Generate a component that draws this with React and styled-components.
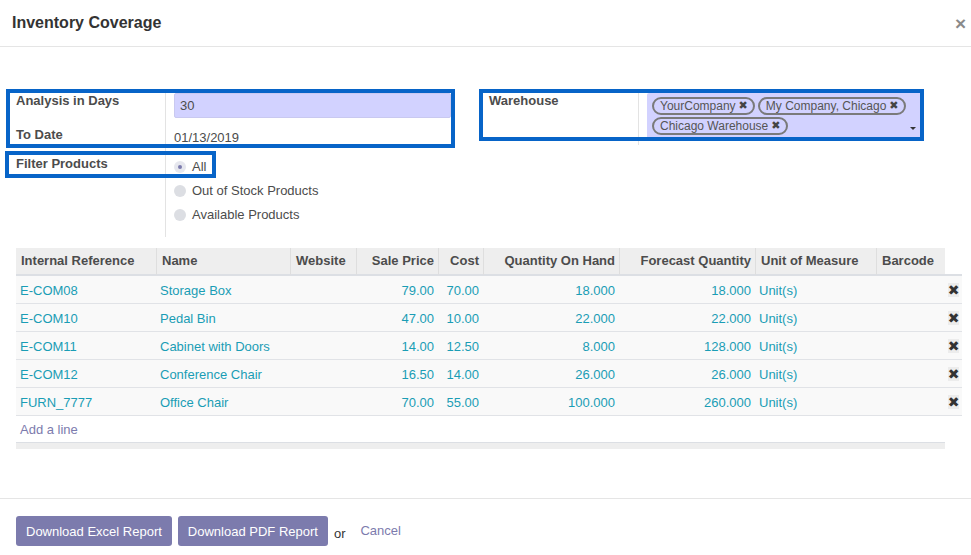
import React from "react";
import styled, { createGlobalStyle } from "styled-components";

const PURPLE = "#7c7bad";
const TEAL = "#1a9db5";

const rows = [
  { ref: "E-COM08", name: "Storage Box", price: "79.00", cost: "70.00", onHand: "18.000", forecast: "18.000" },
  { ref: "E-COM10", name: "Pedal Bin", price: "47.00", cost: "10.00", onHand: "22.000", forecast: "22.000" },
  { ref: "E-COM11", name: "Cabinet with Doors", price: "14.00", cost: "12.50", onHand: "8.000", forecast: "128.000" },
  { ref: "E-COM12", name: "Conference Chair", price: "16.50", cost: "14.00", onHand: "26.000", forecast: "26.000" },
  { ref: "FURN_7777", name: "Office Chair", price: "70.00", cost: "55.00", onHand: "100.000", forecast: "260.000" },
];

const columns = [
  { label: "Internal Reference", width: 140 },
  { label: "Name", width: 134 },
  { label: "Website", width: 66 },
  { label: "Sale Price", width: 82, right: true },
  { label: "Cost", width: 45, right: true },
  { label: "Quantity On Hand", width: 136, right: true },
  { label: "Forecast Quantity", width: 136, right: true },
  { label: "Unit of Measure", width: 121 },
  { label: "Barcode", width: 69 },
];

const warehouses = ["YourCompany", "My Company, Chicago", "Chicago Warehouse"];

export default function App() {
  return (
    <>
      <GlobalStyle />
      <Modal>
        <Header>
          <Title>Inventory Coverage</Title>
          <Close>×</Close>
        </Header>

        <Body>
          <FormRow>
            <Group>
              <Label>Analysis in Days</Label>
              <Field $pad="1px 0 8px 8px">
                <Input defaultValue="30" />
              </Field>
              <Label>To Date</Label>
              <Field $pad="3px 0 8px 8px">01/13/2019</Field>
              <Label>Filter Products</Label>
              <Field $pad="2px 0 8px 8px">
                <RadioItem>
                  <Radio $checked />
                  All
                </RadioItem>
                <RadioItem>
                  <Radio />
                  Out of Stock Products
                </RadioItem>
                <RadioItem>
                  <Radio />
                  Available Products
                </RadioItem>
              </Field>
            </Group>

            <Group>
              <Label>Warehouse</Label>
              <Field $pad="1px 0 4px 8px">
                <TagField>
                  {warehouses.map((w) => (
                    <Tag key={w}>
                      {w}
                      <TagX>✖</TagX>
                    </Tag>
                  ))}
                  <Caret />
                </TagField>
              </Field>
            </Group>
          </FormRow>

          <Table>
            <colgroup>
              {columns.map((c) => (
                <col key={c.label} style={{ width: c.width }} />
              ))}
              <col style={{ width: 17 }} />
            </colgroup>
            <thead>
              <tr>
                {columns.map((c, i) => (
                  <Th key={c.label} $right={c.right} $first={i === 0}>
                    {c.label}
                  </Th>
                ))}
                <Th $blank />
              </tr>
            </thead>
            <tbody>
              {rows.map((r) => (
                <Row key={r.ref}>
                  <Td>{r.ref}</Td>
                  <Td>{r.name}</Td>
                  <Td />
                  <Td $right>{r.price}</Td>
                  <Td $right>{r.cost}</Td>
                  <Td $right>{r.onHand}</Td>
                  <Td $right>{r.forecast}</Td>
                  <Td>Unit(s)</Td>
                  <Td />
                  <DeleteCell>
                    <DeleteIcon>✖</DeleteIcon>
                  </DeleteCell>
                </Row>
              ))}
              <tr>
                <AddCell colSpan={10}>
                  <AddLink>Add a line</AddLink>
                </AddCell>
              </tr>
            </tbody>
            <tfoot>
              <tr>
                <FootCell colSpan={9} />
                <FootCell $blank />
              </tr>
            </tfoot>
          </Table>

          <Highlight style={{ left: 6, top: 42, width: 449, height: 59 }} />
          <Highlight style={{ left: 5, top: 104, width: 211, height: 27 }} />
          <Highlight style={{ left: 479, top: 42, width: 445, height: 52 }} />
        </Body>

        <Footer>
          <Button>Download Excel Report</Button>
          <Button>Download PDF Report</Button>
          <Or>or</Or>
          <Cancel>Cancel</Cancel>
        </Footer>
      </Modal>
    </>
  );
}

const GlobalStyle = createGlobalStyle`
  * { box-sizing: border-box; }
  body {
    margin: 0;
    background: #fff;
    font-family: "Liberation Sans", Arial, sans-serif;
    font-size: 13px;
    color: #4c4c4c;
  }
`;

const Modal = styled.div`
  width: 971px;
  height: 555px;
  display: flex;
  flex-direction: column;
  overflow: hidden;
`;

const Header = styled.div`
  height: 47px;
  border-bottom: 1px solid #e5e5e5;
  display: flex;
  align-items: center;
  justify-content: space-between;
  padding: 0 5px 0 12px;
`;

const Title = styled.h4`
  margin: 0;
  font-size: 16px;
  font-weight: bold;
  color: #333;
`;

const Close = styled.span`
  font-size: 19px;
  font-weight: bold;
  color: #8a8a8a;
  line-height: 1;
`;

const Body = styled.div`
  flex: 1;
  position: relative;
  padding: 45px 0 0 16px;
`;

const FormRow = styled.div`
  display: grid;
  grid-template-columns: 435px 435px;
  column-gap: 38px;
  align-items: start;
`;

const Group = styled.div`
  display: grid;
  grid-template-columns: 150px 1fr;
`;

const Label = styled.div`
  border-right: 1px solid #e3e3e3;
  font-weight: bold;
  line-height: 18px;
  color: #4c4c4c;
`;

const Field = styled.div`
  padding: ${(p) => p.$pad};
  line-height: 18px;
`;

const Input = styled.input`
  display: block;
  width: 277px;
  height: 25px;
  padding: 0 5px;
  border: 1px solid #c9c9f0;
  border-radius: 2px;
  background: #d2d2ff;
  font-family: inherit;
  font-size: 13px;
  color: #4c4c4c;
  outline: none;
`;

const RadioItem = styled.div`
  display: flex;
  align-items: center;
  gap: 6px;
  height: 18px;
  margin-bottom: 6px;
  padding-top: 1px;
`;

const Radio = styled.span`
  width: 12px;
  height: 12px;
  border-radius: 50%;
  background: ${(p) => (p.$checked ? "#e6e7ee" : "#dcdee3")};
  display: flex;
  align-items: center;
  justify-content: center;

  &::after {
    content: "";
    display: ${(p) => (p.$checked ? "block" : "none")};
    width: 4px;
    height: 4px;
    border-radius: 50%;
    background: ${PURPLE};
  }
`;

const TagField = styled.div`
  position: relative;
  width: 277px;
  min-height: 48px;
  background: #d2d2ff;
  border-radius: 2px;
  padding: 4px 12px 4px 5px;
  display: flex;
  flex-wrap: wrap;
  align-content: flex-start;
  gap: 2px 3px;
`;

const Tag = styled.span`
  display: inline-flex;
  align-items: center;
  gap: 3px;
  height: 18px;
  padding: 0 5px 0 6px;
  border: 2px solid #7a7a7a;
  border-radius: 10px;
  font-size: 12px;
  line-height: 14px;
  color: #555;
`;

const TagX = styled.span`
  font-family: "DejaVu Sans", sans-serif;
  font-size: 11px;
  color: #444;
`;

const Caret = styled.span`
  position: absolute;
  right: 8px;
  bottom: 11px;
  width: 0;
  height: 0;
  border-left: 3px solid transparent;
  border-right: 3px solid transparent;
  border-top: 3px solid #333;
`;

const Table = styled.table`
  margin-top: 11px;
  width: 946px;
  table-layout: fixed;
  border-collapse: separate;
  border-spacing: 0;
`;

const Th = styled.th`
  padding: 4px 4px 4px 5px;
  line-height: 18px;
  font-weight: bold;
  color: #4c4c4c;
  white-space: nowrap;
  overflow: hidden;
  text-align: ${(p) => (p.$right ? "right" : "left")};
  background: ${(p) => (p.$blank ? "transparent" : "#eeeeee")};
  border-left: ${(p) => (p.$first || p.$blank ? "none" : "1px solid #dedede")};
  border-bottom: 2px solid #dcdfe4;
`;

const Row = styled.tr`
  background: #f9f9f9;
`;

const Td = styled.td`
  padding: 6px 4px 3px 4px;
  line-height: 18px;
  color: ${TEAL};
  white-space: nowrap;
  text-align: ${(p) => (p.$right ? "right" : "left")};
  border-bottom: 1px solid #e1e3e7;
`;

const DeleteCell = styled.td`
  padding: 6px 0 3px;
  line-height: 18px;
  text-align: center;
  border-bottom: 1px solid #e1e3e7;
`;

const DeleteIcon = styled.span`
  display: inline-block;
  background: #ececec;
  font-family: "DejaVu Sans", sans-serif;
  font-size: 14px;
  line-height: 14px;
  color: #333;
`;

const AddCell = styled.td`
  padding: 5px 4px 3px 4px;
  line-height: 18px;
  background: #fff;
`;

const AddLink = styled.span`
  color: ${PURPLE};
`;

const FootCell = styled.td`
  height: 7px;
  padding: 0;
  font-size: 0;
  background: ${(p) => (p.$blank ? "transparent" : "#eeeeee")};
  border-top: ${(p) => (p.$blank ? "none" : "1px solid #dcdfe4")};
`;

const Highlight = styled.div`
  position: absolute;
  border: 4px solid #0764c8;
  pointer-events: none;
`;

const Footer = styled.div`
  height: 57px;
  border-top: 1px solid #e5e5e5;
  padding: 17px 16px 0;
  display: flex;
  align-items: flex-start;
`;

const Button = styled.button`
  height: 30px;
  padding: 0 10px;
  margin-right: 6px;
  border: none;
  border-radius: 3px;
  background: ${PURPLE};
  color: #fff;
  font-family: inherit;
  font-size: 13px;
`;

const Or = styled.span`
  margin: 9px 0 0 0;
  line-height: 18px;
  color: #333;
`;

const Cancel = styled.span`
  margin: 6px 0 0 15px;
  line-height: 18px;
  color: ${PURPLE};
`;
